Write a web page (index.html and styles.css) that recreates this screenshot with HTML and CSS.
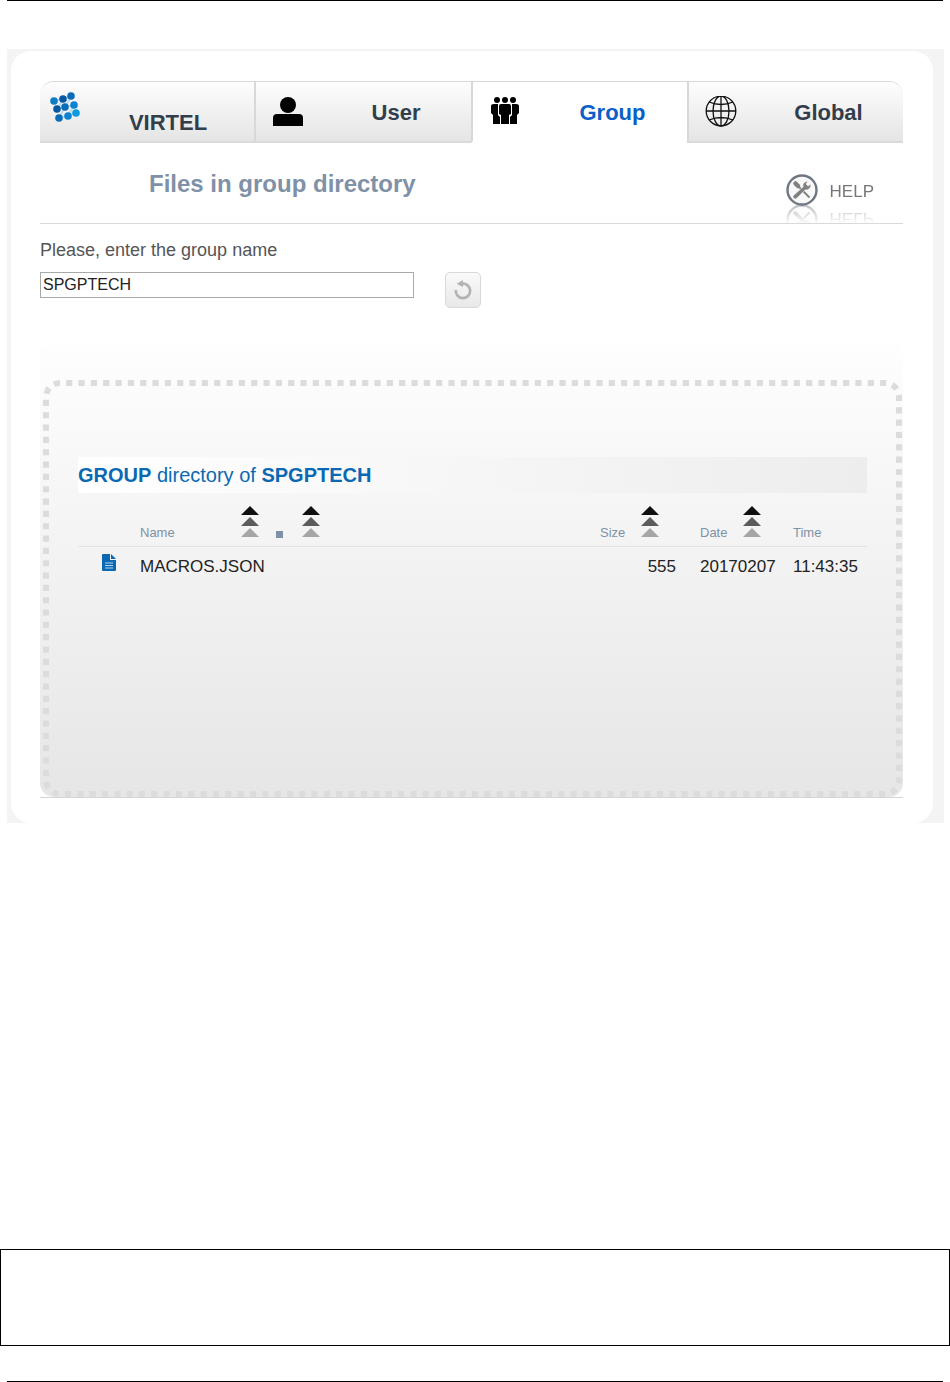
FILE: index.html
```html
<!DOCTYPE html>
<html lang="en">
<head>
<meta charset="utf-8">
<title>Files in group directory</title>
<link rel="stylesheet" href="styles.css">
</head>
<body>
<svg class="defs" aria-hidden="true">
  <symbol id="sort" viewBox="0 0 18 32">
    <path d="M9 0l9 9H0z" fill="#111"/><path d="M9 11l9 9H0z" fill="#5c5c5c"/><path d="M9 22l9 9H0z" fill="#a6a6a6"/>
  </symbol>
</svg>
<div class="page">
  <hr class="rule">
  <div class="frame">
    <main class="card">
      <nav class="tabs">
        <a class="tab tab-home" href="#virtel">
          <svg class="icon" viewBox="0 0 32 32" aria-hidden="true">
            <g fill="none" stroke="#b9daf1" stroke-width="2"><path d="M4 9L22 4M6 17L24 13M9 26L26 21M7 18L13 7M15 15L22 4M9 26L15 15M18 24L24 13"/></g>
            <g fill="#0a6cb8"><circle cx="4" cy="9" r="3.8" fill="#0b7cc6"/><circle cx="13" cy="7" r="3.8" fill="#0757a3"/><circle cx="21" cy="4" r="3.8"/><circle cx="7" cy="17" r="3.8" fill="#0757a3"/><circle cx="15" cy="15" r="3.8"/><circle cx="24" cy="13" r="3.8" fill="#0b83cf"/><circle cx="9" cy="26" r="3.8"/><circle cx="18" cy="24" r="3.8" fill="#0b83cf"/><circle cx="26" cy="21" r="3.8" fill="#0c9be0"/></g>
          </svg>
          <span>VIRTEL</span>
        </a>
        <a class="tab" href="#user">
          <svg class="icon" viewBox="0 0 32 32" aria-hidden="true"><circle cx="16" cy="9" r="8"/><path d="M1 30v-8q0-4 4-4h22q4 0 4 4v8z"/></svg>
          <span>User</span>
        </a>
        <a class="tab tab-active" href="#group" aria-current="page">
          <svg class="icon" viewBox="0 0 32 32" aria-hidden="true">
            <circle cx="8" cy="4" r="3"/><circle cx="16" cy="4" r="3"/><circle cx="24" cy="4" r="3"/>
            <path d="M12 8h8q2 0 2 2v8l-2 1v9h-8v-9l-2-1v-8q0-2 2-2z"/>
            <path d="M5 8h4v11l2 2v7H4v-9l-2-2v-7q0-2 3-2zM27 8h-4v11l-2 2v7h7v-9l2-2v-7q0-2-3-2z"/>
          </svg>
          <span>Group</span>
        </a>
        <a class="tab" href="#global">
          <svg class="icon" viewBox="0 0 32 32" aria-hidden="true"><g fill="none" stroke="#111" stroke-width="1.300"><circle cx="16" cy="15" r="14.800"/><ellipse cx="16" cy="15" rx="8" ry="15"/><path d="M16 0v30M1 15h30M4 6q12 5 24 0M4 24q12-5 24 0"/></g></svg>
          <span>Global</span>
        </a>
      </nav>

      <header class="heading">
        <h1>Files in group directory</h1>
        <a class="help" href="#help">
          <svg class="icon" viewBox="0 0 32 32" aria-hidden="true">
            <circle cx="16" cy="16" r="14.500" fill="#f8f8f8" stroke="#6d7681" stroke-width="2.400"/>
            <g stroke="#808080" fill="none" stroke-linecap="round"><path d="M11 11l12 12" stroke-width="1.800"/><path d="M9.500 9.500l2.500 2.500" stroke-width="4.500"/></g>
            <path d="M8 21L17 13Q16 8 22 7L20 10L22 12L25 10Q25 16 19 16L11 24Q9 26 7.500 24Q6 23 8 21z" fill="#808080" stroke="#f8f8f8" stroke-width=".5"/>
          </svg>
          <span>HELP</span>
        </a>
      </header>

      <form class="search">
        <label for="group-name">Please, enter the group name</label>
        <div class="search-row">
          <input id="group-name" type="text" value="SPGPTECH">
          <button class="reload" type="button" aria-label="Reload">
            <svg viewBox="0 0 20 20" aria-hidden="true"><path d="M2 10a8 8 0 1 0 7-7" fill="none" stroke="#b3b3b3" stroke-width="3"/><path d="M3 3l7-4v8z" fill="#b3b3b3"/></svg>
          </button>
        </div>
      </form>

      <section class="directory">
        <div class="listing">
          <svg class="dots" aria-hidden="true"><rect pathLength="406"/></svg>
          <h2><strong>GROUP</strong> directory of <strong>SPGPTECH</strong></h2>
          <table>
            <colgroup><col class="c-icon"><col class="c-name"><col class="c-ext"><col class="c-size"><col class="c-date"><col class="c-time"></colgroup>
            <thead>
              <tr>
                <th></th>
                <th><div class="head name-head">Name<button type="button" aria-label="Sort by name"><svg><use href="#sort"/></svg></button></div></th>
                <th><div class="head"><b class="dot"></b><button type="button" aria-label="Sort by extension"><svg><use href="#sort"/></svg></button></div></th>
                <th><div class="head">Size<button type="button" aria-label="Sort by size"><svg><use href="#sort"/></svg></button></div></th>
                <th><div class="head">Date<button type="button" aria-label="Sort by date"><svg><use href="#sort"/></svg></button></div></th>
                <th><div class="head">Time</div></th>
              </tr>
            </thead>
            <tbody>
              <tr>
                <td class="file"><svg viewBox="0 0 14 18" aria-hidden="true"><path d="M1 0h7v6h6v10q0 1-1 1H1q-1 0-1-1V1q0-1 1-1z" fill="#0a69b2"/><path d="M9 0l5 5H9z" fill="#0a69b2"/><path d="M3 9h8M3 11.500h8M3 14h8" stroke="#b4d4ec"/></svg></td>
                <td>MACROS.JSON</td>
                <td></td>
                <td class="size">555</td>
                <td>20170207</td>
                <td>11:43:35</td>
              </tr>
            </tbody>
          </table>
        </div>
      </section>
    </main>
  </div>
  <div class="note"></div>
  <hr class="rule">
</div>
</body>
</html>
```
FILE: styles.css
```css
* { box-sizing: border-box; }
body { margin: 0; background: #fff; color: #222; font-family: "Liberation Sans", Arial, sans-serif; }
a { color: inherit; text-decoration: none; }
button { padding: 0; cursor: pointer; }
svg { display: block; flex: none; }
.defs { position: absolute; width: 0; height: 0; }

.page { display: flex; flex-direction: column; min-height: 100vh; }
.rule { width: auto; height: 1px; margin: 0 7px; border: 0; background: #000; }
.frame { margin: 48px 6px 0 7px; padding: 2px 11px 0 4px; background: #f4f4f4; }
.card { padding: 30px 30px 25px 29px; border-radius: 20px; background: #fff; }
.note { height: 97px; margin: auto 0 35px; border: 1px solid #000; }

.tabs { display: grid; grid-template-columns: 214fr 217fr 216fr 216fr; height: 62px; border-top: 1px solid #d8d8d8; border-radius: 14px 14px 0 0; overflow: hidden; }
.tab { display: flex; padding: 14px 0 0 16px; border-bottom: 2px solid #dadada; border-left: 2px solid #d8d8d8; background: linear-gradient(#fdfdfd, #e5e5e5); color: #333e4b; font-size: 22px; font-weight: bold; line-height: 34px; }
.tab span { flex: 1; padding-left: 17px; text-align: center; }
.icon { width: 32px; height: 32px; }
.tab-home { padding: 10px 0 0 10px; border-left: 0; }
.tab-home span { padding: 14px 0 0; }
.tab-active { border-bottom-color: #fff; background: #fff; color: #0a60c8; }

.heading { display: flex; justify-content: space-between; height: 81px; padding: 26px 29px 0 109px; border-bottom: 1px solid #d9d9d9; overflow: hidden; }
h1 { margin: 0; color: #7f91a7; font-size: 24px; line-height: 30px; }
.help { display: flex; gap: 12px; height: 32px; margin-top: 5px; color: #777; font-size: 17px; line-height: 35px; -webkit-box-reflect: below -2px linear-gradient(transparent 35%, rgba(0, 0, 0, .5)); }

.search { padding-top: 15px; }
.search label { display: block; color: #555; font-size: 18px; line-height: 22px; }
.search-row { display: flex; gap: 31px; margin-top: 11px; }
.search input { flex: 0 1 374px; min-width: 0; height: 26px; padding: 0 2px; border: 1px solid #a9a9a9; border-radius: 0; background: #fff; color: #222; font: 16px "Liberation Sans", Arial, sans-serif; }
.reload { display: grid; place-items: center; width: 36px; height: 36px; border: 1px solid #d9d9d9; border-radius: 5px; background: linear-gradient(#fafafa, #e8e8e8); }
.reload svg { width: 18px; height: 18px; overflow: visible; }

.card { display: flex; flex-direction: column; }
.directory { margin-top: 35px; border-bottom: 1px solid #d5d5d5; }
.listing { position: relative; min-height: 454px; padding: 114px 36px 0 38px; border-radius: 14px; background: linear-gradient(#fefefe, #e6e6e6); }
.dots { position: absolute; inset: 37px 0 0; width: 100%; height: calc(100% - 37px); }
.dots rect { x: 6px; y: 3px; width: calc(100% - 10px); height: calc(100% - 6px); rx: 14px; fill: none; stroke: #dcdcdc; stroke-width: 6px; stroke-dasharray: 1 1; stroke-dashoffset: 1; }
h2 { position: relative; margin: 0; background: linear-gradient(90deg, #fff, #ededed); color: #0a69b2; font-size: 20px; font-weight: normal; line-height: 36px; }

table { position: relative; width: 100%; border-collapse: collapse; table-layout: fixed; }
.c-icon { width: 62px; }
.c-ext { width: 324px; }
.c-size { width: 100px; }
.c-date { width: 93px; }
.c-time { width: 74px; }
th { height: 53px; padding: 0; border-bottom: 1px solid #e3e3e3; color: #7f91a7; font-size: 13px; font-weight: normal; text-align: left; vertical-align: bottom; }
.head { display: flex; align-items: flex-end; gap: 16px; height: 41px; line-height: 15px; padding-bottom: 6px; }
.name-head { gap: 66px; }
.head button { width: 18px; height: 32px; margin-bottom: 2px; border: 0; background: none; }
.head svg { width: 18px; height: 32px; }
.dot { width: 7px; height: 7px; margin-bottom: 2px; background: #7f91a7; }
.head .dot + button { margin-left: 3px; }
td { height: 42px; padding: 0; color: #222; font-size: 17px; }
td.size { padding-right: 24px; text-align: right; }
.file svg { width: 14px; height: 18px; margin: 0 0 8px 24px; }
```
